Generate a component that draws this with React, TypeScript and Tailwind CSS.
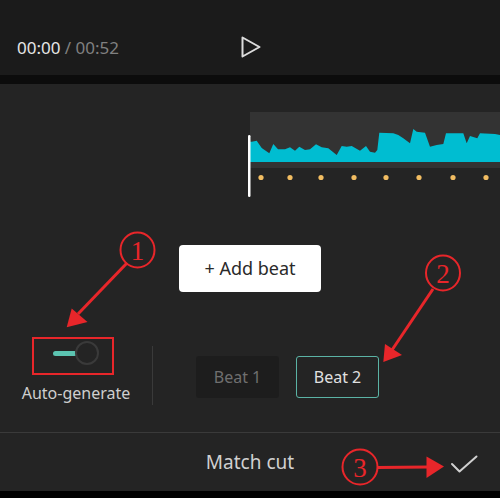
import React from "react";

const font = { fontFamily: '"Noto Sans", "Liberation Sans", sans-serif' };

// waveform top edge, in page coords (x from 250, y from 112)
const wave: [number, number][] = [
  [251.7, 141.7], [256.7, 140.7], [261.7, 148], [269.3, 153.3], [273.3, 144],
  [278, 149.3], [285, 149.3], [290, 147.3], [295, 150.7], [299.3, 146.7],
  [305, 150], [310, 149.3], [316, 144.3], [321.7, 147.3], [328.3, 148.3],
  [336.7, 155], [341.7, 146], [346.7, 146.7], [351.7, 146], [360, 150.7],
  [366, 146], [370, 151.7], [375, 152.7], [377.3, 150], [379.3, 132.7],
  [393.3, 133.3], [398.3, 135], [403.3, 138.3], [410, 143.3], [413.3, 129],
  [416.7, 131.7], [425, 132.7], [430, 146.7], [436.7, 145], [443.3, 144],
  [446, 133.3], [463.3, 133.3], [466.7, 143.3], [470, 136], [477.3, 138.3],
  [480, 133.3], [495, 134], [500, 135],
];

const beatDots = [261, 290, 321, 354, 386, 419, 453, 486];

function Timeline() {
  const pts = wave.map(([x, y]) => `${x - 248},${y - 112}`).join(" ");
  return (
    <svg width="252" height="86" viewBox="0 0 252 86" className="block">
      <rect x="2" y="0" width="250" height="56" fill="#333333" />
      <polygon points={`2,50 2,29.7 ${pts} 252,50`} fill="#00bdd1" />
      {beatDots.map((x) => (
        <circle key={x} cx={x - 248} cy="65.5" r="2.6" fill="#f2bd62" />
      ))}
      <rect x="0" y="23" width="2.5" height="62" rx="1.2" fill="#ffffff" />
    </svg>
  );
}

function Annotations() {
  const red = "#e8262a";
  return (
    <svg
      width="500"
      height="498"
      viewBox="0 0 500 498"
      className="absolute left-0 top-0 pointer-events-none"
    >
      <rect x="33" y="338" width="80" height="36" fill="none" stroke={red} strokeWidth="2" />

      <ellipse cx="137.5" cy="250" rx="17" ry="17.5" fill="none" stroke={red} strokeWidth="2" />
      <text x="137.5" y="259.5" textAnchor="middle" fontSize="27" fill={red} fontFamily='"Liberation Serif", serif'>1</text>
      <line x1="127" y1="263" x2="78" y2="314" stroke={red} strokeWidth="3" />
      <polygon points="66.7,327.3 71.7,308.5 87.5,322" fill={red} />

      <ellipse cx="443" cy="273" rx="17" ry="17.5" fill="none" stroke={red} strokeWidth="2" />
      <text x="443" y="282.5" textAnchor="middle" fontSize="27" fill={red} fontFamily='"Liberation Serif", serif'>2</text>
      <line x1="433" y1="289" x2="392" y2="350" stroke={red} strokeWidth="3" />
      <polygon points="383.3,362 385,344 402,355" fill={red} />

      <ellipse cx="360" cy="467" rx="17.5" ry="17.5" fill="none" stroke={red} strokeWidth="2" />
      <text x="360" y="476.5" textAnchor="middle" fontSize="27" fill={red} fontFamily='"Liberation Serif", serif'>3</text>
      <line x1="377.5" y1="467.5" x2="428" y2="467" stroke={red} strokeWidth="3" />
      <polygon points="444,466.5 426.5,456.5 426.5,478" fill={red} />
    </svg>
  );
}

export default function App() {
  return (
    <div className="relative w-[500px] h-[498px] overflow-hidden bg-[#242424] flex flex-col" style={font}>
      {/* Player bar */}
      <div className="h-[75px] bg-[#1b1b1b] relative flex items-end pb-[16px] pl-[17px]">
        <div className="text-[17px] leading-[22px]">
          <span className="text-[#e6e6e6]">00:00</span>
          <span className="text-[#808080]"> / 00:52</span>
        </div>
        <svg
          width="22"
          height="24"
          viewBox="0 0 22 24"
          className="absolute left-[240px] top-[35px]"
          fill="none"
          stroke="#dcdcdc"
          strokeWidth="2"
          strokeLinejoin="round"
        >
          <path d="M2.5 2.5 L19.5 12 L2.5 21.5 Z" />
        </svg>
      </div>
      <div className="h-[9px] bg-[#0c0c0c]" />

      {/* Editor panel */}
      <div className="flex-1 flex flex-col">
        <div className="pl-[248px] pt-[28px]">
          <Timeline />
        </div>

        <div className="flex justify-center mt-[47px]">
          <button className="w-[142px] h-[47px] rounded-[4px] bg-white text-[#2a2a2a] text-[18px] font-normal flex items-center justify-center">
            + Add beat
          </button>
        </div>

        <div className="flex items-start mt-[49px]">
          <div className="w-[152px] flex flex-col items-center">
            <div className="relative w-[46px] h-[24px] flex items-center">
              <div className="w-[24px] h-[5px] rounded-full bg-[#5cc4b1]" />
              <div className="-ml-[2px] w-[24px] h-[24px] rounded-full border-2 border-[#3a3a3a] bg-[#242424]" />
            </div>
            <div className="mt-[18px] text-[16px] leading-[20px] text-[#cfcfcf]">Auto-generate</div>
          </div>
          <div className="w-px h-[59px] mt-[5px] bg-[#3a3a3a]" />
          <div className="flex gap-[17px] ml-[43px] mt-[15px]">
            <div className="w-[83px] h-[42px] rounded-[3px] bg-[#1d1d1d] text-[#6f6f6f] text-[16px] flex items-center justify-center">
              Beat 1
            </div>
            <div className="w-[83px] h-[42px] rounded-[3px] border border-[#5bb3a5] text-[#e0e0e0] text-[16px] flex items-center justify-center">
              Beat 2
            </div>
          </div>
        </div>
      </div>

      {/* Bottom bar */}
      <div className="h-[59px] border-t border-[#3a3a3a] relative flex items-center justify-center">
        <span className="text-[19px] text-[#d0d0d0]">Match cut</span>
        <svg
          width="30"
          height="20"
          viewBox="0 0 30 20"
          className="absolute left-[450px] top-[22px]"
          fill="none"
          stroke="#d0d0d0"
          strokeWidth="2"
          strokeLinecap="round"
          strokeLinejoin="round"
        >
          <path d="M2 9 L9.5 16.5 L26.5 1.5" />
        </svg>
      </div>
      <div className="h-[7px] bg-black" />

      <Annotations />
    </div>
  );
}
